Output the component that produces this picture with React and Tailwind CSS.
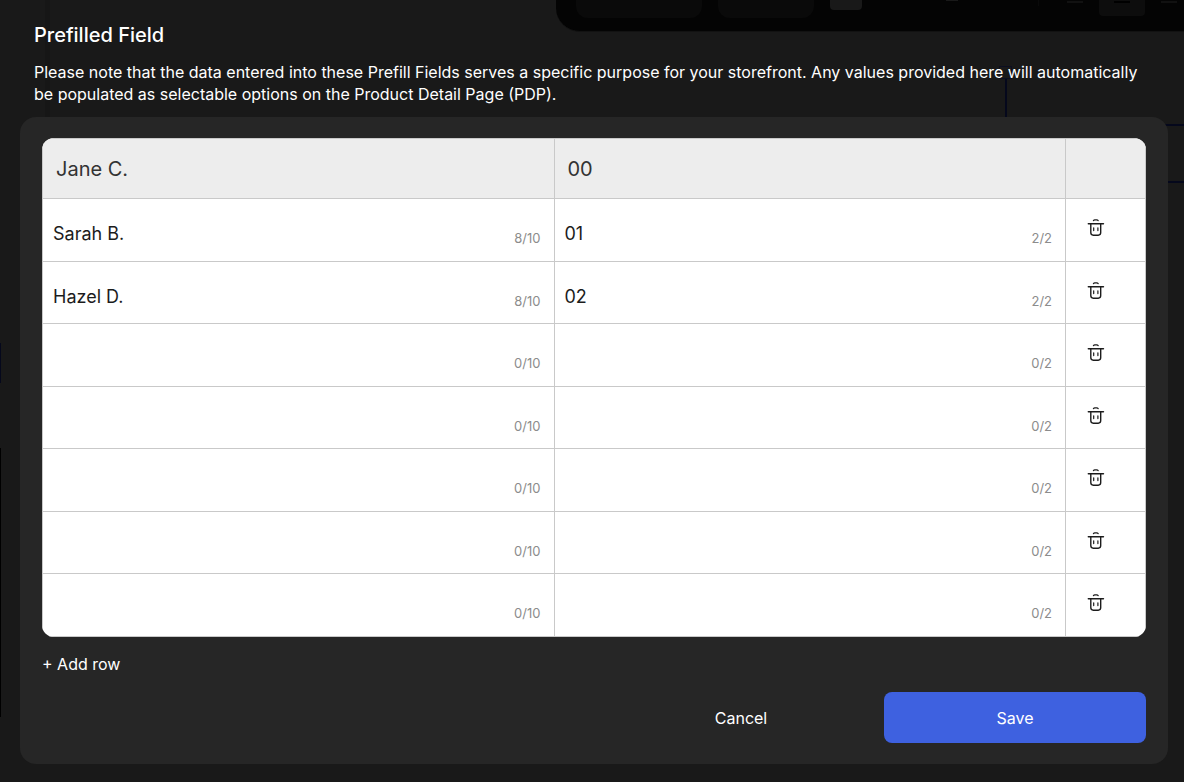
import React, { useState } from 'react';

const NAME_MAX = 10;
const NUMBER_MAX = 2;

const initialRows = [
  { id: 1, name: 'Sarah B.', number: '01' },
  { id: 2, name: 'Hazel D.', number: '02' },
  { id: 3, name: '', number: '' },
  { id: 4, name: '', number: '' },
  { id: 5, name: '', number: '' },
  { id: 6, name: '', number: '' },
  { id: 7, name: '', number: '' },
];

function TrashIcon() {
  return (
    <svg
      width="18"
      height="18"
      viewBox="0 0 18 18"
      fill="none"
      stroke="#1c1c1c"
      strokeWidth="1.4"
      strokeLinecap="round"
      aria-hidden="true"
    >
      <path d="M1.3 4.7h15.2" />
      <path d="M6.4 1.6c.4-.5.8-.7 1.4-.7h2c.6 0 1 .2 1.4.7" strokeWidth="1.2" />
      <path d="M3.8 5v8.6c0 1.8.8 2.6 2.5 2.6h4.9c1.7 0 2.5-.8 2.5-2.6V5" />
      <path d="M6.7 8.8v2.8M10.9 8.8v2.8" strokeWidth="1.2" />
    </svg>
  );
}

// Dimmed editor canvas that shows through behind the dialog
function Backdrop() {
  return (
    <div className="absolute inset-0 overflow-hidden" aria-hidden="true">
      {/* Editor toolbar */}
      <div className="ml-auto flex h-8 w-[53%] items-start rounded-bl-3xl border-b border-[#121212] bg-[#040404] pl-5">
        <div className="h-[18px] w-[126px] shrink-0 rounded-b-xl bg-[#0a0a0a]" />
        <div className="ml-4 h-[18px] w-24 shrink-0 rounded-b-xl bg-[#0a0a0a]" />
        <div className="ml-4 h-[10px] w-8 shrink-0 rounded-b bg-[#191919]" />
        <div className="ml-[84px] h-px w-3 shrink-0 bg-[#191919]" />
        <div className="ml-20 h-[6px] w-px shrink-0 bg-[#0a0a0a]" />
        <div className="mt-px ml-7 h-[2px] w-4 shrink-0 bg-[#111]" />
        <div className="ml-4 flex h-4 w-[46px] shrink-0 justify-center rounded-b bg-[#0d0d0d] pt-px">
          <div className="h-[2px] w-4 bg-black" />
        </div>
        <div className="mt-px ml-4 h-[2px] w-4 shrink-0 bg-[#111]" />
      </div>

      {/* Artboard guides and selection handles */}
      <div className="absolute top-0 left-[45px] h-1/2 w-[5px] bg-[#161616]" />
      <div className="absolute top-[66px] right-[172px] flex flex-col items-center">
        <div className="h-[13px] w-[13px] border border-[#0c0e20]" />
        <div className="h-10 w-[2px] bg-[#05081c]" />
      </div>
      <div className="absolute top-[124px] right-0 h-[59px] w-10 border-y-2 border-[#05081c]" />
      <div className="absolute top-[343px] left-0 flex w-px flex-col gap-[65px]">
        <div className="h-10 bg-[#05081c]" />
        <div className="h-[269px] bg-black" />
      </div>
    </div>
  );
}

function FieldCell({ label, value, max, onChange }) {
  return (
    <td className="border border-[#c9c9c9] p-0">
      <div className="flex items-center pt-2 pr-[13px] pl-[10px]">
        <input
          type="text"
          aria-label={label}
          value={value}
          maxLength={max}
          onChange={(e) => onChange(e.target.value)}
          className="h-7 min-w-0 flex-1 bg-transparent text-lg text-[#1c1c1c] outline-none"
        />
        <span className="pt-2 text-[13px] leading-5 text-[#8c8c8c]">
          {value.length}/{max}
        </span>
      </div>
    </td>
  );
}

export default function App() {
  const [rows, setRows] = useState(initialRows);

  const updateRow = (id, key, value) => {
    setRows(rows.map((row) => (row.id === id ? { ...row, [key]: value } : row)));
  };

  const removeRow = (id) => setRows(rows.filter((row) => row.id !== id));

  const addRow = () => setRows([...rows, { id: Date.now(), name: '', number: '' }]);

  return (
    <div className="relative min-h-screen bg-[#191919] font-['Inter',sans-serif] text-white">
      <Backdrop />

      <main className="relative pt-[23px] pr-4 pb-[18px] pl-5">
        <header className="pr-3 pl-[14px]">
          <h1 className="text-xl leading-6 font-medium">Prefilled Field</h1>
          <p className="mt-[14px] text-base leading-[22px]">
            Please note that the data entered into these Prefill Fields serves a specific purpose for your
            storefront. Any values provided here will automatically be populated as selectable options on the
            Product Detail Page (PDP).
          </p>
        </header>

        <section className="mt-3 rounded-2xl bg-[#262626] px-[22px] py-[21px]">
          <div className="overflow-hidden rounded-xl bg-white">
            <table className="w-full table-fixed border-collapse text-left">
              <thead>
                <tr className="h-[60px] bg-[#ededed] text-xl text-[#333]">
                  <th scope="col" className="border border-[#c9c9c9] px-[13px] py-0 font-normal">
                    Jane C.
                  </th>
                  <th scope="col" className="border border-[#c9c9c9] px-[13px] py-0 font-normal">
                    00
                  </th>
                  <td className="w-20 border border-[#c9c9c9]" />
                </tr>
              </thead>
              <tbody>
                {rows.map((row) => (
                  <tr key={row.id} className="h-[63px] even:h-[62px]">
                    <FieldCell
                      label="Name"
                      value={row.name}
                      max={NAME_MAX}
                      onChange={(value) => updateRow(row.id, 'name', value)}
                    />
                    <FieldCell
                      label="Number"
                      value={row.number}
                      max={NUMBER_MAX}
                      onChange={(value) => updateRow(row.id, 'number', value)}
                    />
                    <td className="border border-[#c9c9c9] p-0 pb-1 pl-[21px]">
                      <button
                        type="button"
                        aria-label="Delete row"
                        onClick={() => removeRow(row.id)}
                        className="block cursor-pointer"
                      >
                        <TrashIcon />
                      </button>
                    </td>
                  </tr>
                ))}
              </tbody>
            </table>
          </div>

          <button type="button" onClick={addRow} className="mt-[15px] block cursor-pointer text-base leading-6">
            + Add row
          </button>

          <div className="mt-4 flex justify-end gap-3">
            <button type="button" className="h-[51px] w-[262px] cursor-pointer rounded-lg text-base">
              Cancel
            </button>
            <button type="button" className="h-[51px] w-[262px] cursor-pointer rounded-lg bg-[#3e61e0] text-base">
              Save
            </button>
          </div>
        </section>
      </main>
    </div>
  );
}
